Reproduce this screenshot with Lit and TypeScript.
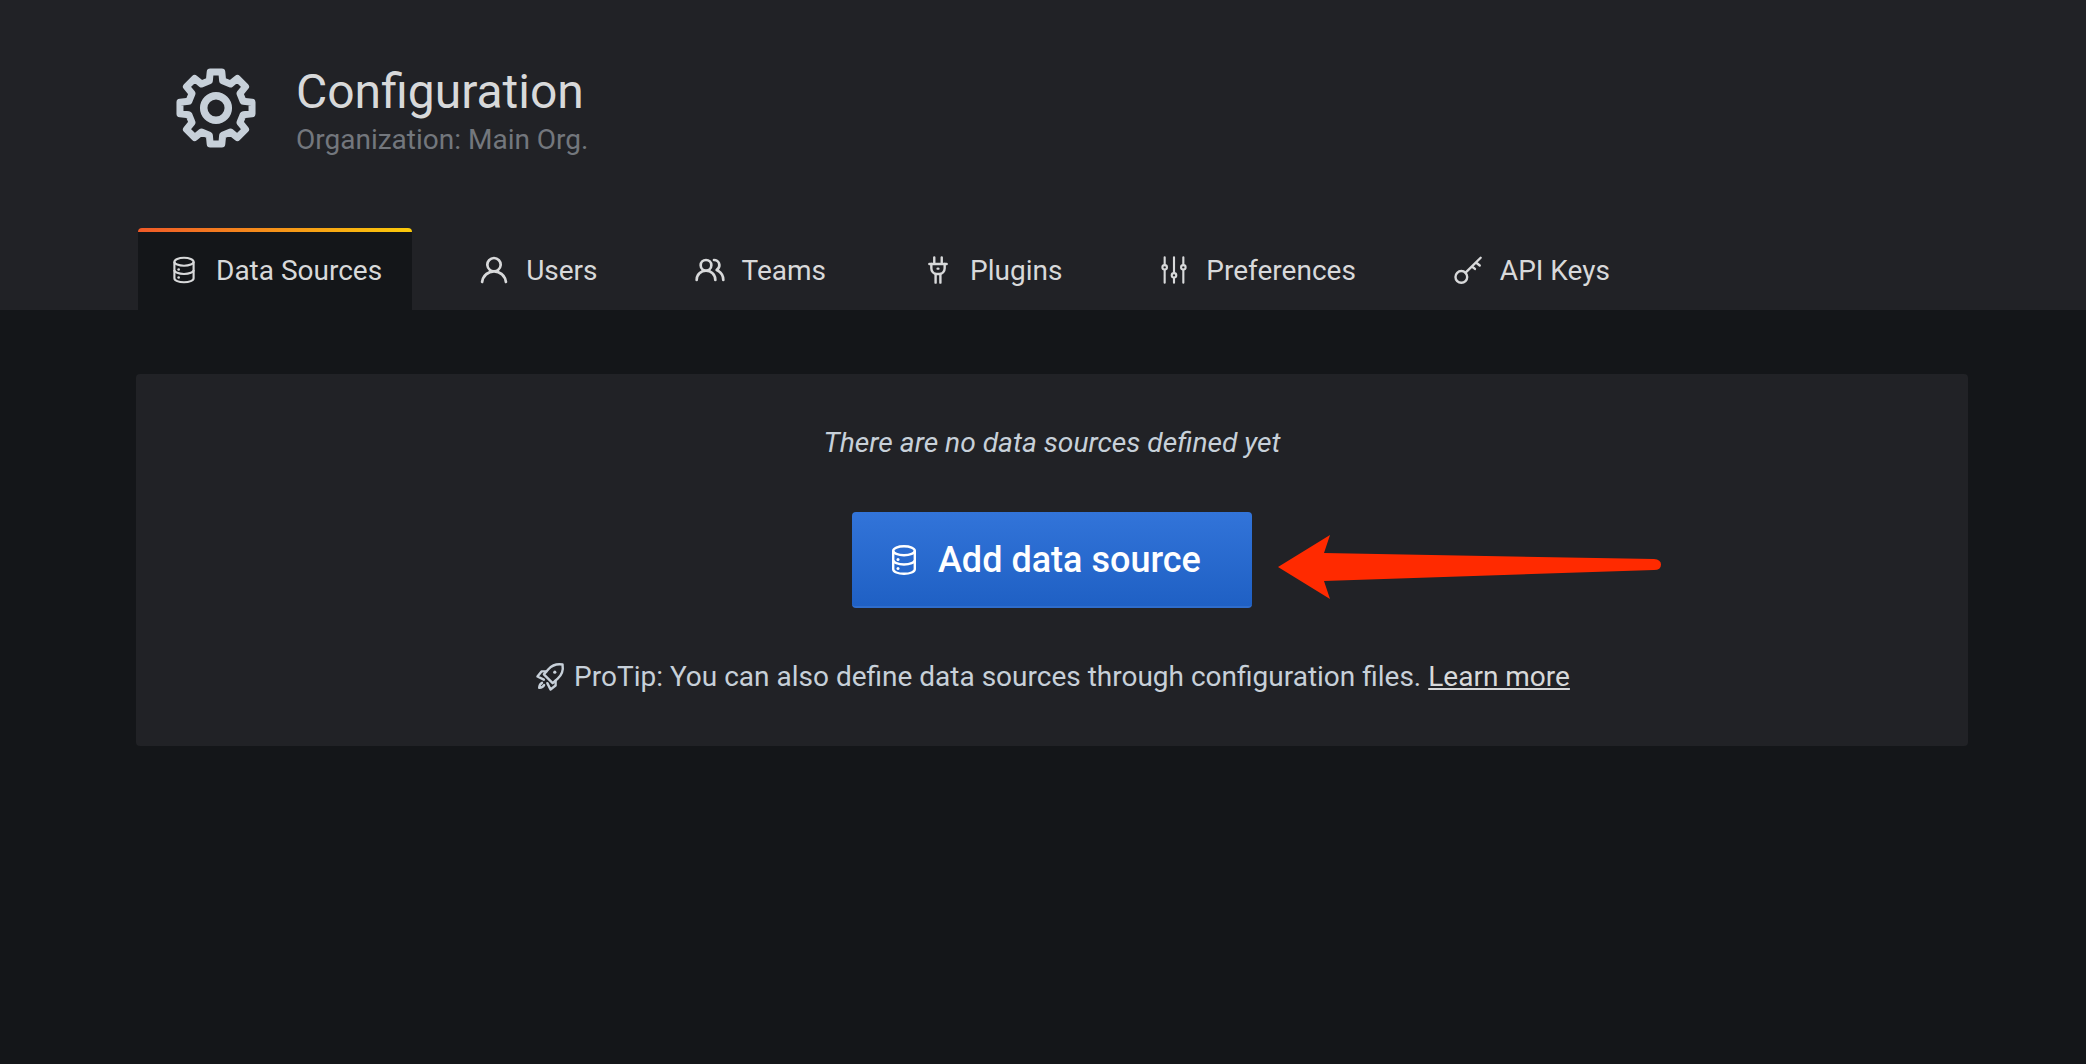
import { LitElement, html, css, svg } from "lit";
import { customElement } from "lit/decorators.js";

// 8 tooth cog outline, built on a 80 unit box
function cogPath(): string {
  const c = 40;
  const tip = 36.5;
  const valley = 28;
  const parts: string[] = [];
  for (let i = 0; i < 8; i++) {
    const a = (i * Math.PI) / 4 - Math.PI / 2;
    const pt = (r: number, off: number) =>
      `${(c + r * Math.cos(a + off)).toFixed(2)} ${(c + r * Math.sin(a + off)).toFixed(2)}`;
    parts.push(`${i === 0 ? "M" : "L"}${pt(valley, -0.24)}`);
    parts.push(`L${pt(tip, -0.16)}`);
    parts.push(`L${pt(tip, 0.16)}`);
    parts.push(`L${pt(valley, 0.24)}`);
  }
  return parts.join(" ") + " Z";
}

const icons: Record<string, unknown> = {
  database: svg`<g fill="none" stroke="currentColor" stroke-width="1.6">
    <ellipse cx="12" cy="5.800" rx="7.200" ry="3"/>
    <path d="M4.800 5.800v12.400c0 1.700 3.200 3 7.200 3s7.200-1.300 7.200-3V5.800"/>
    <path d="M4.800 12c0 1.700 3.200 3 7.200 3s7.200-1.300 7.200-3"/></g>
    <circle cx="8" cy="11.600" r="1" fill="currentColor"/>
    <circle cx="8" cy="17.600" r="1" fill="currentColor"/>`,
  user: svg`<path fill="currentColor" d="M15.71,12.71a6,6,0,1,0-7.42,0,10,10,0,0,0-6.22,8.18,1,1,0,0,0,2,.22,8,8,0,0,1,15.9,0,1,1,0,0,0,1,.89h.11a1,1,0,0,0,.88-1.1,10,10,0,0,0-6.25-8.19ZM12,12a4,4,0,1,1,4-4A4,4,0,0,1,12,12Z"/>`,
  users: svg`<path fill="currentColor" d="M12.3,12.22A4.92,4.92,0,0,0,14,8.5a5,5,0,0,0-10,0,4.92,4.92,0,0,0,1.7,3.72A8,8,0,0,0,1,19.5a1,1,0,0,0,2,0,6,6,0,0,1,12,0,1,1,0,0,0,2,0A8,8,0,0,0,12.3,12.22ZM9,11.5a3,3,0,1,1,3-3A3,3,0,0,1,9,11.5Zm9.74.32A5,5,0,0,0,15,3.5a1,1,0,0,0,0,2,3,3,0,0,1,3,3,3,3,0,0,1-1.5,2.59,1,1,0,0,0-.5.84,1,1,0,0,0,.45.86l.39.26.13.07a7,7,0,0,1,4,6.38,1,1,0,0,0,2,0A9,9,0,0,0,18.74,11.82Z"/>`,
  plug: svg`<g fill="none" stroke="currentColor" stroke-width="1.800" stroke-linecap="round" stroke-linejoin="round">
    <path d="M9.200 2.500v5M14.800 2.500v5M5.500 7.500h13"/>
    <path d="M7 7.500v3.200c0 2.400 1.800 4.300 3.600 4.300h2.800c1.800 0 3.600-1.900 3.600-4.300V7.500"/>
    <path d="M10.200 15v6.500M13.800 15v6.500"/></g>
    <ellipse cx="12" cy="11" rx="1.200" ry="0.900" fill="currentColor"/>`,
  sliders: svg`<g fill="none" stroke="currentColor" stroke-width="1.600" stroke-linecap="round">
    <path d="M5 2.500v5.800M5 11.800v9.700M12 2.500v11.800M12 17.800v3.700M19 2.500v5.800M19 11.800v9.700"/>
    <circle cx="5" cy="10" r="1.700"/><circle cx="12" cy="16" r="1.700"/><circle cx="19" cy="10" r="1.700"/></g>`,
  key: svg`<g fill="none" stroke="currentColor" stroke-width="1.800" stroke-linecap="round">
    <circle cx="7" cy="17.200" r="4.400"/>
    <path d="M10.200 14 21.500 2.800M18 6.400l2.800 2.200M15 9.400l2.200 1.800"/></g>`,
  rocket: svg`<g fill="none" stroke="currentColor" stroke-width="1.800" stroke-linejoin="round" stroke-linecap="round">
    <path d="M21.400 2.600c-4.200-.7-8 .7-10.600 3.600L7.400 10l6.600 6.600 3.800-3.400c2.900-2.600 4.300-6.400 3.600-10.600Z"/>
    <path d="M9.200 7.800H5.600L2.600 11.600l4.800 2.400M16.200 14.800v3.600l-3.800 3-2.400-4.800"/>
    <path d="M6 16.400c-1.300.6-2 1.900-2.100 3.700 1.800-.1 3.100-.8 3.700-2.100"/></g>
    <circle cx="15.600" cy="8.400" r="1.200" fill="currentColor"/>`,
};

function icon(name: string, cls = "icon") {
  return html`<svg class=${cls} viewBox="0 0 24 24">${icons[name]}</svg>`;
}

const TABS = [
  { label: "Data Sources", icon: "database", active: true },
  { label: "Users", icon: "user" },
  { label: "Teams", icon: "users" },
  { label: "Plugins", icon: "plug" },
  { label: "Preferences", icon: "sliders" },
  { label: "API Keys", icon: "key" },
];

@customElement("app-root")
export class AppRoot extends LitElement {
  protected render() {
    return html`
      <header class="page-header">
        <div class="title-row">
          <svg class="cog" viewBox="0 0 80 80">
            <path d=${cogPath()} fill="none" stroke="currentColor" stroke-width="7" stroke-linejoin="round" />
            <circle cx="40" cy="40" r="12.300" fill="none" stroke="currentColor" stroke-width="7.500" />
          </svg>
          <div class="titles">
            <h1>Configuration</h1>
            <div class="sub">Organization: Main Org.</div>
          </div>
        </div>
        <nav class="tabs">
          ${TABS.map(
            (t) => html`
              <a class="tab ${t.active ? "active" : ""}">
                ${icon(t.icon)}
                <span>${t.label}</span>
              </a>
            `
          )}
        </nav>
      </header>
      <main class="content">
        <section class="card">
          <p class="empty">There are no data sources defined yet</p>
          <button class="add">
            ${icon("database", "icon add-icon")}
            <span>Add data source</span>
          </button>
          <p class="tip">
            ${icon("rocket", "icon tip-icon")}
            <span>ProTip: You can also define data sources through configuration files.</span>
            <a>Learn more</a>
          </p>
          <svg class="arrow" viewBox="0 0 384 66">
            <path
              d="M0 33 L52 1 L46 19 L376 25 Q383 25.500 383 30.500 Q383 36 376 36 L46 47 L52 65 Z"
              fill="#ff2a00"
            />
          </svg>
        </section>
      </main>
    `;
  }

  static styles = css`
    :host {
      display: block;
      min-height: 1064px;
      background: #141619;
      font-family: Roboto, "Liberation Sans", sans-serif;
      color: #d8d9da;
    }

    .page-header {
      background: #212226;
      padding: 68px 0 0 138px;
      height: 310px;
      box-sizing: border-box;
      display: flex;
      flex-direction: column;
    }

    .title-row {
      display: flex;
      gap: 41px;
      padding-left: 38px;
      height: 160px;
    }

    .cog {
      width: 80px;
      height: 80px;
      color: #c7d0d9;
      flex: none;
    }

    h1 {
      margin: 0;
      font-size: 48px;
      font-weight: 400;
      line-height: 48px;
      margin-left: -1px;
      color: #d8d9da;
    }

    .sub {
      font-size: 28px;
      line-height: 32px;
      margin-top: 8px;
      margin-left: -1px;
      color: #73777d;
    }

    .tabs {
      display: flex;
      gap: 36px;
    }

    .tab {
      display: flex;
      align-items: center;
      gap: 16px;
      height: 82px;
      box-sizing: border-box;
      padding: 2px 30px 0;
      font-size: 28px;
      color: #d8d9da;
      border-radius: 4px 4px 0 0;
      position: relative;
    }

    .tab.active {
      background: #141619;
    }

    .tab.active::before {
      content: "";
      position: absolute;
      top: 0;
      left: 0;
      right: 0;
      height: 4px;
      border-radius: 4px 4px 0 0;
      background: linear-gradient(90deg, #f05a28, #fbca0a);
    }

    .icon {
      width: 32px;
      height: 32px;
      flex: none;
      display: block;
    }

    .content {
      padding: 64px 118px 0 136px;
    }

    .card {
      position: relative;
      height: 372px;
      box-sizing: border-box;
      background: #212226;
      border-radius: 4px;
      display: flex;
      flex-direction: column;
      align-items: center;
    }

    .empty {
      margin: 51px 0 0;
      font-size: 28.2px;
      line-height: 36px;
      font-style: italic;
      color: #c7d0d9;
    }

    .add {
      margin-top: 51px;
      width: 400px;
      height: 96px;
      box-sizing: border-box;
      padding: 2px 0 0 34px;
      display: flex;
      align-items: center;
      gap: 16px;
      border: none;
      border-bottom: 2px solid #2f6dcc;
      border-radius: 4px;
      background: linear-gradient(#3274d9, #1f60c4);
      color: #fff;
      font-family: inherit;
      font-size: 36px;
      font-weight: 500;
    }

    .add-icon {
      width: 36px;
      height: 36px;
    }

    .tip {
      margin: 51px 0 0;
      display: flex;
      align-items: center;
      font-size: 28px;
      line-height: 36px;
      color: #c7d0d9;
    }

    .tip-icon {
      margin-right: 8px;
    }

    .tip a {
      margin-left: 7px;
      color: #d8d9da;
      text-decoration: underline;
    }

    .arrow {
      position: absolute;
      left: 1142px;
      top: 160px;
      width: 384px;
      height: 66px;
    }
  `;
}

declare global {
  interface HTMLElementTagNameMap {
    "app-root": AppRoot;
  }
}
